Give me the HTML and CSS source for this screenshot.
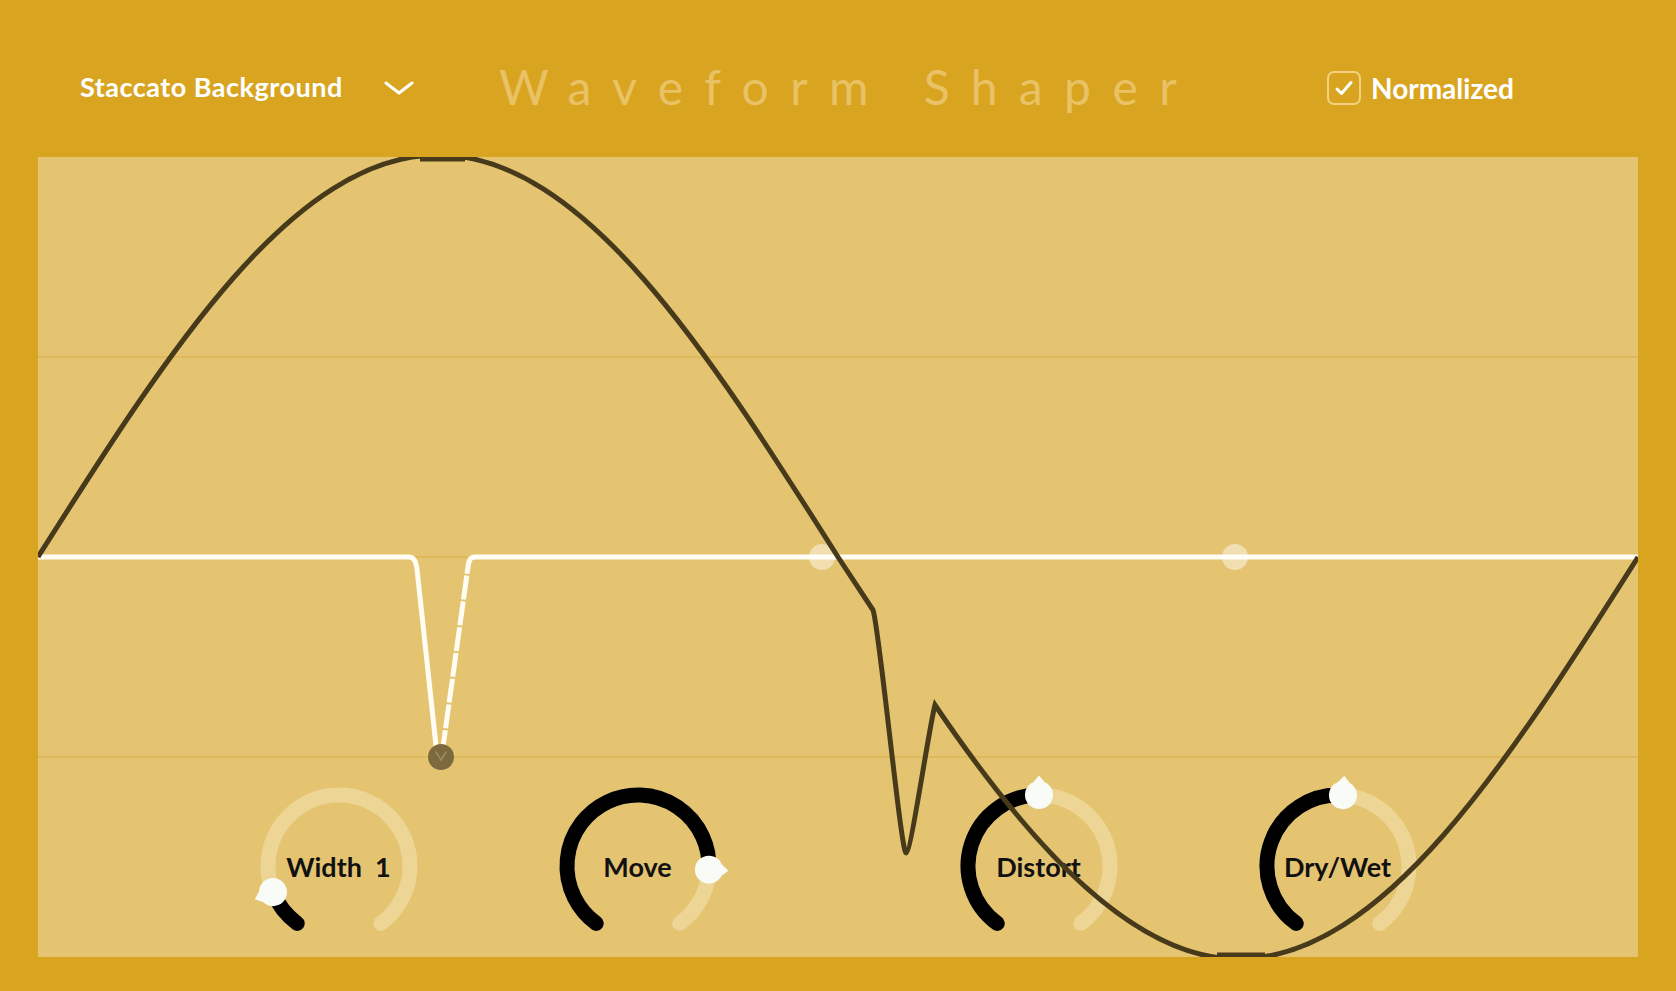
FILE: index.html
```html
<!DOCTYPE html>
<html lang="en">
<head>
<meta charset="utf-8">
<title>Waveform Shaper</title>
<link rel="stylesheet" href="styles.css">
</head>
<body>
<div class="app">
  <header class="header">
    <div class="dropdown">
      <span class="dropdown-label">Staccato Background</span>
      <svg class="chevron" width="30" height="14" viewBox="0 0 30 14"><path d="M2 2 L15 12 L28 2" fill="none" stroke="#fff" stroke-width="3" stroke-linecap="round" stroke-linejoin="round"/></svg>
    </div>
    <h1 class="title">Waveform Shaper</h1>
    <label class="toggle">
      <span class="checkbox"><svg width="30" height="30" viewBox="0 0 30 30"><path d="M8 16 L12.5 20.5 L22 9.5" fill="none" stroke="#fff" stroke-width="3" stroke-linecap="round" stroke-linejoin="round"/></svg></span>
      <span class="toggle-label">Normalized</span>
    </label>
  </header>

  <main class="panel">
    <svg class="grid" viewBox="0 0 1600 800" width="1600" height="800">
      <line x1="0" y1="200" x2="1600" y2="200" class="gridline"/>
      <line x1="0" y1="400" x2="1600" y2="400" class="gridline"/>
      <line x1="0" y1="600" x2="1600" y2="600" class="gridline"/>
      <path class="shape" d="M0,400 L371,400 C376,400 378,404 379,412 L399,598"/>
      <path class="shape dashed" d="M404,597 L430,410 C431,403 432,400 437,400"/>
      <path class="shape" d="M436,400 L1600,400"/>
      <circle cx="784" cy="400" r="13" class="handle"/>
      <circle cx="1197" cy="400" r="13" class="handle"/>
      <circle cx="403" cy="600" r="13" class="handle-dark"/>
      <path d="M398,595 L403,603 L408,595" fill="none" stroke="#98896a" stroke-width="1.5" stroke-linecap="round"/>
    </svg>

    <div class="knobs">
      <div class="knob-group">
        <div class="knob">
          <svg viewBox="0 0 160 160" width="160" height="160">
            <path class="track" d="M38.27,137.44 A71,71 0 1 1 121.73,137.44"/>
            <path class="value" d="M38.27,137.44 A71,71 0 0 1 14.0,106.1"/>
            <g class="thumb" transform="translate(14.0,106.1) rotate(-111.6)"><circle r="14"/><path d="M-6,-12.5 L0,-19.5 L6,-12.5 Z"/></g>
          </svg>
          <span class="knob-label">Width&nbsp; 1</span>
        </div>
        <div class="knob">
          <svg viewBox="0 0 160 160" width="160" height="160">
            <path class="track" d="M38.27,137.44 A71,71 0 1 1 121.73,137.44"/>
            <path class="value" d="M38.27,137.44 A71,71 0 1 1 150.9,83.7"/>
            <g class="thumb" transform="translate(150.9,83.7) rotate(93)"><circle r="14"/><path d="M-6,-12.5 L0,-19.5 L6,-12.5 Z"/></g>
          </svg>
          <span class="knob-label">Move</span>
        </div>
      </div>
      <div class="knob-group">
        <div class="knob">
          <svg viewBox="0 0 160 160" width="160" height="160">
            <path class="track" d="M38.27,137.44 A71,71 0 1 1 121.73,137.44"/>
            <path class="value" d="M38.27,137.44 A71,71 0 0 1 80,9"/>
            <g class="thumb" transform="translate(80,9) rotate(0)"><circle r="14"/><path d="M-6,-12.5 L0,-19.5 L6,-12.5 Z"/></g>
          </svg>
          <span class="knob-label">Distort</span>
        </div>
        <div class="knob">
          <svg viewBox="0 0 160 160" width="160" height="160">
            <path class="track" d="M38.27,137.44 A71,71 0 1 1 121.73,137.44"/>
            <path class="value" d="M38.27,137.44 A71,71 0 0 1 84.96,9.17"/>
            <g class="thumb" transform="translate(84.96,9.17) rotate(4)"><circle r="14"/><path d="M-6,-12.5 L0,-19.5 L6,-12.5 Z"/></g>
          </svg>
          <span class="knob-label">Dry/Wet</span>
        </div>
      </div>
    </div>

    <svg class="wave" viewBox="0 0 1600 800" width="1600" height="800">
      <path class="curve" d="M0,400 C130.5,194 255.2,-2 400,-2 C544.8,-2 669.5,194 800,400 L835,453 C841,468 863,696 868,696 C873,696 891,570 897,548 C998,697 1099,802 1200,802 C1344.8,802 1469.5,606 1600,400"/>
      <path class="curve" d="M382,2 L427,2 M1179,798 L1227,798"/>
    </svg>
  </main>
</div>
</body>
</html>
```

FILE: styles.css
```css
* { box-sizing: border-box; }

html, body {
  margin: 0;
  padding: 0;
  background: #d9a521;
  overflow: hidden;
}

body {
  font-family: Lato, "Liberation Sans", sans-serif;
  width: 1676px;
  height: 991px;
}

.app {
  padding: 0 38px 34px;
}

.header {
  height: 157px;
  display: flex;
  align-items: center;
  padding: 16px 0 0 42px;
}

.dropdown {
  width: 334px;
  display: flex;
  align-items: center;
  justify-content: space-between;
}

.dropdown-label {
  color: #fff;
  font-size: 27px;
  font-weight: 700;
  letter-spacing: 0.5px;
}

.chevron {
  display: block;
  margin-top: 2px;
}

.title {
  margin: 0 0 0 85px;
  width: 702px;
  font-size: 48px;
  font-weight: 400;
  color: #e8c265;
  letter-spacing: 21.4px;
  white-space: nowrap;
  line-height: 1;
}

.toggle {
  margin-left: 126px;
  display: flex;
  align-items: center;
  gap: 10px;
  margin-top: 2px;
}

.checkbox {
  width: 34px;
  height: 34px;
  border: 2px solid #f2d27f;
  border-radius: 7px;
  display: flex;
  align-items: center;
  justify-content: center;
}

.checkbox svg { display: block; }

.toggle-label {
  color: #fff;
  font-size: 28px;
  font-weight: 700;
}

.panel {
  position: relative;
  width: 1600px;
  height: 800px;
  background: #e5c471;
  display: flex;
  flex-direction: column;
  justify-content: flex-end;
  padding-bottom: 11px;
  overflow: hidden;
}

.grid, .wave {
  position: absolute;
  left: 0;
  top: 0;
  display: block;
}

.wave { pointer-events: none; }

.gridline {
  stroke: #ddb553;
  stroke-width: 1.5;
}

.shape {
  fill: none;
  stroke: #fffdf4;
  stroke-width: 5;
  stroke-linecap: butt;
}

.shape.dashed {
  stroke-dasharray: 24 2;
}

.handle {
  fill: #fff;
  fill-opacity: 0.45;
}

.handle-dark {
  fill: #7c6a3e;
}

.curve {
  fill: none;
  stroke: #463a1b;
  stroke-width: 5;
  stroke-linejoin: miter;
}

.knobs {
  position: relative;
  display: flex;
  justify-content: center;
  gap: 241px;
}

.knob-group {
  display: flex;
  gap: 139px;
}

.knob {
  width: 160px;
  height: 160px;
  display: grid;
  place-items: center;
}

.knob > * { grid-area: 1 / 1; }

.knob svg {
  display: block;
  overflow: visible;
}

.track {
  fill: none;
  stroke: #edd595;
  stroke-width: 15;
  stroke-linecap: round;
}

.value {
  fill: none;
  stroke: #000;
  stroke-width: 15;
  stroke-linecap: round;
}

.thumb circle, .thumb path {
  fill: #f8fbf6;
}

.knob-label {
  font-size: 27px;
  font-weight: 700;
  color: #111;
  line-height: 1;
  white-space: nowrap;
}
```
